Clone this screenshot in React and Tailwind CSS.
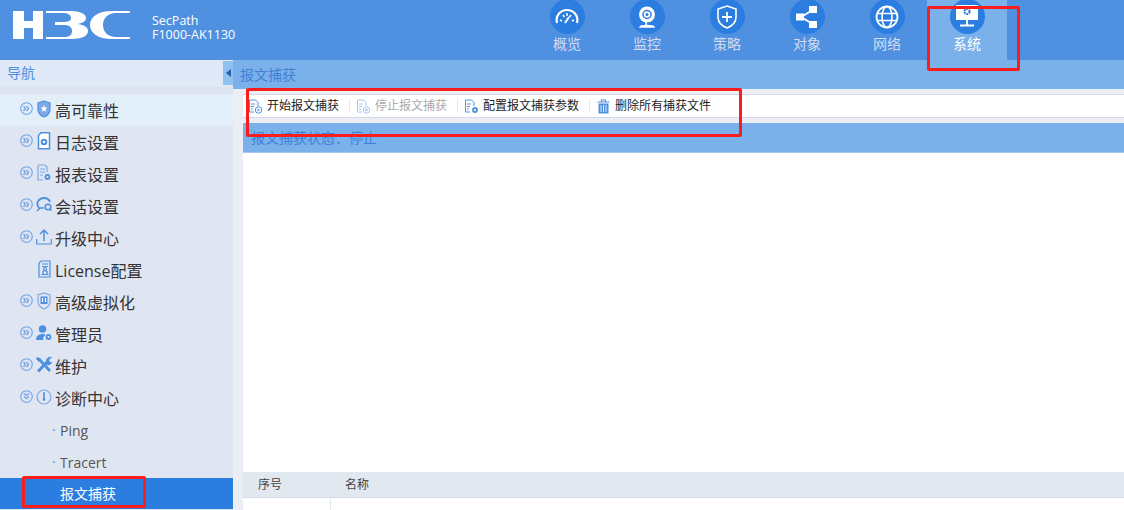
import { Fragment } from 'react';

const B = '#2b7de0';
const L = '#4f90e0';

const Logo = () => (
  <svg width="118" height="30" viewBox="0 0 118 30" className="mb-[10px] shrink-0">
    <g fill="#fff">
      <path d="M0 1h11v10h9V1h10v28H20V18H11v11H0z" />
      <path d="M33 1h25c9 0 15 3 15 7 0 3-3 5-8 6 6 1 10 3 10 7 0 5-6 8-17 8H33v-2h18c5 0 8-2 8-6 0-4-3-6-8-6H42v-3h8c5 0 8-1 8-4s-3-5-8-5H33z" />
      <path d="M117 1H99C85 1 77 7 77 15s8 14 22 14h18v-2h-14c-8 0-13-5-13-12s5-12 13-12h14z" />
    </g>
  </svg>
);

const TabIcon = ({ children }) => (
  <span className="flex h-[35px] w-[35px] items-center justify-center rounded-full bg-[#2b7de0]">
    <svg width="24" height="24" viewBox="0 0 24 24" fill="none" stroke="#fff" strokeWidth="2">{children}</svg>
  </span>
);

const tabs = [
  {
    label: '概览',
    icon: (
      <>
        <path d="M2 18c-2-8 4-13 10-13s12 5 10 13" strokeWidth="2.200" />
        <path d="M5 15l2 1M8 10l1.500 2M12 8v3M19 15l-2 1M16 10l-1.500 2" strokeWidth="1.500" />
        <path d="M10 18l4-6" strokeWidth="2" />
      </>
    ),
  },
  {
    label: '监控',
    icon: (
      <>
        <circle cx="12" cy="9.500" r="8" fill="#fff" stroke="none" />
        <circle cx="12" cy="9.500" r="4" stroke={B} strokeWidth="1.500" />
        <circle cx="12" cy="9.500" r="1.500" fill={B} stroke="none" />
        <path d="M11 17v3M5 22c1-2 13-2 14 0z" fill="#fff" strokeWidth="1.500" />
      </>
    ),
  },
  {
    label: '策略',
    icon: (
      <>
        <path d="M12 1l9 3v8c0 6-4 9-9 11-5-2-9-5-9-11V4z" strokeWidth="1.600" />
        <path d="M12 7v10M7 12h10" strokeWidth="1.800" />
      </>
    ),
  },
  {
    label: '对象',
    icon: (
      <>
        <path d="M18 5L6 12l12 7" strokeWidth="2" />
        <rect x="1" y="8.500" width="8" height="7" fill="#fff" stroke="none" />
        <rect x="14" y="1" width="8" height="7" fill="#fff" stroke="none" />
        <rect x="14" y="16" width="8" height="7" fill="#fff" stroke="none" />
      </>
    ),
  },
  {
    label: '网络',
    icon: (
      <>
        <circle cx="12" cy="12" r="10.500" strokeWidth="1.800" />
        <ellipse cx="12" cy="12" rx="5" ry="10.500" strokeWidth="1.600" />
        <path d="M2 8.500h20M2 15.500h20" strokeWidth="1.600" />
      </>
    ),
  },
  {
    label: '系统',
    active: true,
    icon: (
      <>
        <path d="M1 -2h22v17H1z" fill="#fff" stroke="none" />
        <circle cx="12" cy="6.500" r="2.600" stroke={B} strokeWidth="2" strokeDasharray="2 .8" />
        <path d="M12 15v5" strokeWidth="2" />
        <path d="M5 20.500h14" strokeWidth="2" />
      </>
    ),
  },
];

const Sm = ({ children, className = '' }) => (
  <svg width="16" height="18" viewBox="0 0 16 18" fill="none" stroke={L} strokeWidth="1.200" className={`shrink-0 ${className}`}>
    {children}
  </svg>
);

const navIcons = {
  shield: (
    <>
      <path d="M8 1l6 2v7c0 3-3 6-6 7-3-1-6-4-6-7V3z" fill="#7fa9e4" />
      <path d="M8 5l1 2.500 2.500.2-2 1.600.7 2.500L8 10.500l-2.200 1.300.7-2.500-2-1.600 2.500-.2z" fill="#fff" stroke="none" />
    </>
  ),
  log: (
    <>
      <path d="M5 .800h8.500v16H2.500V3.500z" fill="#fff" strokeWidth="1.500" />
      <circle cx="8" cy="10" r="2.300" strokeWidth="2" />
    </>
  ),
  report: (
    <>
      <path d="M2 1h7l2 2v5M7 16H2V1" stroke="#7fa9e4" />
      <path d="M4 5h5M4 8h5M4 11h3" stroke="#7fa9e4" />
      <circle cx="11.500" cy="13" r="2" strokeWidth="1.800" />
    </>
  ),
  session: (
    <>
      <path d="M3 12C-1 7 3 2 8 2c3 0 5 1 6 4" strokeWidth="1.800" />
      <path d="M1 15l3-3h4" strokeWidth="1.500" />
      <circle cx="12" cy="11" r="2.800" strokeWidth="1.600" />
      <path d="M14 13l1.500 1.500" strokeWidth="1.500" />
    </>
  ),
  upload: (
    <>
      <path d="M.700 11v5h14.600v-5" />
      <path d="M8 13V2M4 6l4-4 4 4" strokeWidth="1.500" />
    </>
  ),
  license: (
    <>
      <path d="M5 1h9v16H3V3z" />
      <path d="M6 4h6M6 6.500h6M5.500 14.500h7" />
      <circle cx="9" cy="9" r="1.500" />
      <path d="M7 14v-3h4v3" />
    </>
  ),
  virtual: (
    <>
      <path d="M8 1l6 2v7c0 3-3 6-6 7-3-1-6-4-6-7V3z" stroke="#7fa9e4" />
      <rect x="4.500" y="4.500" width="7" height="7.500" fill={L} stroke="none" />
      <path d="M6.500 6v4M9.500 6v4" stroke="#fff" />
    </>
  ),
  admin: (
    <>
      <circle cx="6.500" cy="5" r="3.800" fill={L} stroke="none" />
      <path d="M0 16c0-4 3-6 6.500-6 2 0 3 .5 3 1-2 1-3 3-2 5z" fill={L} stroke="none" />
      <circle cx="12.500" cy="13" r="2" strokeWidth="1.800" />
    </>
  ),
  tools: (
    <>
      <path d="M3 3l11 12" strokeWidth="2.800" />
      <path d="M1 1l3 1 1 3-2 1-3-3z" fill={L} stroke="none" />
      <path d="M2 15.500L12 5" strokeWidth="3" />
      <path d="M10 5c0-3 3-5 6-4l-3 3 1 2 2 0c0 2-3 4-5 3z" fill={L} stroke="none" />
    </>
  ),
  diag: (
    <>
      <circle cx="8" cy="9" r="7" stroke="#7fa9e4" />
      <path d="M8 4v7" strokeWidth="1.600" />
      <circle cx="8" cy="11.500" r="1.300" fill={L} stroke="none" />
    </>
  ),
};

const navItems = [
  { label: '高可靠性', icon: 'shield', selected: true },
  { label: '日志设置', icon: 'log' },
  { label: '报表设置', icon: 'report' },
  { label: '会话设置', icon: 'session' },
  { label: '升级中心', icon: 'upload' },
  { label: 'License配置', icon: 'license', noArrow: true },
  { label: '高级虚拟化', icon: 'virtual' },
  { label: '管理员', icon: 'admin' },
  { label: '维护', icon: 'tools' },
  { label: '诊断中心', icon: 'diag', open: true },
];

const Toggle = ({ open }) => (
  <svg width="13" height="13" viewBox="0 0 13 13" fill="none" stroke="#6ea3e6" className="shrink-0 -translate-y-[2px]">
    <circle cx="6.500" cy="6.500" r="5.800" strokeWidth="1.100" />
    {open ? (
      <path d="M4 3.500l2.500 2 2.500-2M4 6.500l2.500 2 2.500-2" strokeWidth="1.300" />
    ) : (
      <path d="M3.500 4l2 2.500-2 2.500M6.500 4l2 2.500-2 2.500" strokeWidth="1.300" />
    )}
  </svg>
);

const Doc = ({ faded, children }) => (
  <svg width="15" height="15" viewBox="0 0 15 15" fill="none" stroke={L} strokeWidth="1" className={`shrink-0 ${faded ? 'opacity-50' : ''}`}>
    <path d="M1.500 1h6l2.500 2.500V7M6 13H1.500V1" />
    <path d="M3 5h4M3 7.500h3M3 10h2" />
    {children}
  </svg>
);

const tools = [
  { label: '开始报文捕获', icon: <Doc><circle cx="10.500" cy="11" r="3.200" /><path d="M9.500 9.500l2.500 1.500-2.500 1.500z" fill={L} stroke="none" /></Doc> },
  { label: '停止报文捕获', disabled: true, icon: <Doc faded><circle cx="10.500" cy="11" r="3.200" /><rect x="9.300" y="9.800" width="2.400" height="2.400" fill={L} stroke="none" /></Doc> },
  { label: '配置报文捕获参数', icon: <Doc><circle cx="11" cy="11" r="2" strokeWidth="1.800" /></Doc> },
  {
    label: '删除所有捕获文件',
    icon: (
      <svg width="15" height="15" viewBox="0 0 15 15" fill="none" stroke={L} strokeWidth="1.200" className="shrink-0">
        <path d="M1.500 3h12M5.500 3V1h4v2" />
        <path d="M2.500 4.500h10v10h-10z" fill={L} stroke="none" />
        <path d="M5 6v7M7.500 6v7M10 6v7" stroke="#fff" strokeWidth=".8" />
      </svg>
    ),
  },
];

const RedBox = ({ className }) => (
  <div className={`pointer-events-none absolute rounded-[2px] border-[3px] border-[#fb1c1c] ${className}`} />
);

export default function App() {
  return (
    <div className="relative flex h-[510px] w-[1124px] flex-col overflow-hidden bg-[#eceef5] font-['Open_Sans','Noto_Sans_CJK_SC',sans-serif]">
      {/* Header */}
      <header className="flex h-[60px] shrink-0 bg-[#4f90e0]">
        <div className="flex w-[527px] items-center pl-[13px]">
          <Logo />
          <div className="mb-[5px] ml-[21px] text-[12.500px] leading-[14px] text-white">
            <div>SecPath</div>
            <div>F1000-AK1130</div>
          </div>
        </div>
        {tabs.map(tab => (
          <div key={tab.label} className={`flex h-full w-[80px] flex-col items-center ${tab.active ? 'bg-[#7ab1ea]' : ''}`}>
            <div className="-mt-[1px]"><TabIcon>{tab.icon}</TabIcon></div>
            <span className={`text-[14px] leading-[20px] ${tab.active ? 'text-white' : 'text-[#cfdcf2]'}`}>{tab.label}</span>
          </div>
        ))}
      </header>

      <div className="flex min-h-0 flex-1">
        {/* Sidebar */}
        <aside className="w-[233px] shrink-0 bg-[#dfe6f2]">
          <div className="relative flex h-[27px] items-center bg-[#e0e9f7] pb-[3px] pl-[7px] text-[14px] text-[#4f90e0]">
            导航
            <div className="absolute right-0 top-[1px] flex h-[24px] w-[10px] items-center justify-center bg-[#8fc0f0]">
              <span className="h-0 w-0 border-y-[4px] border-r-[5px] border-y-transparent border-r-[#1f5fae]" />
            </div>
          </div>
          <div className="h-[7px] bg-[#dde4f0]" />
          {navItems.map(item => (
            <div key={item.label} className={`flex h-[32px] items-center pl-[20px] ${item.selected ? 'bg-[#e3eff8]' : ''}`}>
              <span className="w-[15px]">{!item.noArrow && <Toggle open={item.open} />}</span>
              <span className="flex w-[20px] justify-start pl-[1px]"><Sm className="-translate-y-[1px]">{navIcons[item.icon]}</Sm></span>
              <span className="mt-[2px] text-[16px] text-[#333]">{item.label}</span>
            </div>
          ))}
          {['Ping', 'Tracert'].map(name => (
            <div key={name} className="flex h-[32px] items-center pl-[52px] text-[14px] text-[#555]">
              <span className="w-[8px] -translate-y-[1px] text-[#4f90e0]">·</span>
              {name}
            </div>
          ))}
          <div className="flex h-[31px] items-center bg-[#2b7de0] pl-[60px] text-[14px] text-white">报文捕获</div>
        </aside>

        {/* Main */}
        <main className="flex min-w-0 flex-1 flex-col">
          <div className="flex h-[29px] shrink-0 items-center bg-[#7ab1ea] pl-[7px] text-[14px] text-[#3f80d8]">报文捕获</div>
          <div className="flex min-h-0 flex-1 flex-col pl-[10px]">
            <div className="mt-[5px] flex h-[24px] shrink-0 items-center border-y border-[#d5d8e8] bg-white pl-[5px]">
              {tools.map((tool, i) => (
                <Fragment key={tool.label}>
                  {i > 0 && <span className="ml-[10px] mr-[6px] h-[14px] w-px bg-[#e4e7ee]" />}
                  <span className={`flex items-center gap-[4px] text-[12px] ${tool.disabled ? 'text-[#aaa]' : 'text-[#222]'}`}>
                    {tool.icon}
                    {tool.label}
                  </span>
                </Fragment>
              ))}
            </div>
            <div className="mt-[5px] flex h-[30px] shrink-0 items-center border-b border-[#a6c8ee] bg-[#7ab1ea] pl-[8px] text-[14px] text-[#3f80d8]">
              报文捕获状态：停止
            </div>
            <div className="flex-1 bg-white" />
            <div className="flex h-[26px] shrink-0 items-center border-b border-[#d5d8e8] bg-[#e2e8f0] text-[12px] text-[#444]">
              <span className="w-[102px] pl-[15px]">序号</span>
              <span>名称</span>
            </div>
            <div className="flex h-[12px] shrink-0 bg-white">
              <div className="w-[88px] border-r border-[#e4e7ee]" />
            </div>
          </div>
        </main>
      </div>

      {/* Red annotation boxes */}
      <RedBox className="left-[927px] top-[6px] h-[65px] w-[93px]" />
      <RedBox className="left-[246px] top-[88px] h-[49px] w-[496px]" />
      <RedBox className="left-[22px] top-[476px] h-[32px] w-[124px]" />
    </div>
  );
}
